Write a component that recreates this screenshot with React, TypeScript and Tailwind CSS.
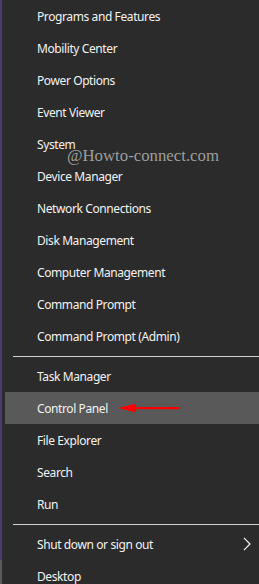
const groupA = [
  "Programs and Features",
  "Mobility Center",
  "Power Options",
  "Event Viewer",
  "System",
  "Device Manager",
  "Network Connections",
  "Disk Management",
  "Computer Management",
  "Command Prompt",
  "Command Prompt (Admin)",
];

const groupB = ["Task Manager", "Control Panel", "File Explorer", "Search", "Run"];

function Item({ label, active, children }: { label: string; active?: boolean; children?: React.ReactNode }) {
  return (
    <li
      className={
        "ml-[3px] h-8 flex items-center pl-[32px] text-[12px] tracking-[-0.4px] text-[#f2f2f2] relative " +
        (active ? "bg-[#595959]" : "")
      }
    >
      <span className="pt-px">{label}</span>
      {children}
    </li>
  );
}

function Separator() {
  return (
    <li className="h-2 flex items-center pl-[11px]">
      <div className="h-px w-full bg-[#d0d0d0]" />
    </li>
  );
}

export default function App() {
  return (
    <div
      className="w-[259px] h-[584px] overflow-hidden bg-[#2b2b2b] flex"
      style={{ fontFamily: '"Noto Sans", "Open Sans", sans-serif' }}
    >
      <div className="w-[2px] flex flex-col">
        <div className="h-[560px] bg-[#4b3b6e]" />
        <div className="flex-1 bg-[#5a5a5a]" />
      </div>
      <ul className="flex-1 relative">
        {groupA.map((l) => (
          <Item key={l} label={l} />
        ))}
        <Separator />
        {groupB.map((l) => (
          <Item key={l} label={l} active={l === "Control Panel"}>
            {l === "Control Panel" && (
              <svg className="absolute left-[113px] top-[10px]" width="64" height="12" viewBox="0 0 64 12">
                <polygon points="0,6 18,1.5 18,10.5" fill="#ff0000" />
                <rect x="16" y="5" width="46" height="2.2" fill="#ff0000" />
              </svg>
            )}
          </Item>
        ))}
        <Separator />
        <Item label="Shut down or sign out">
          <svg className="absolute right-[8px] top-[9px]" width="8" height="14" viewBox="0 0 8 14">
            <polyline points="1,1 7,7 1,13" fill="none" stroke="#f2f2f2" strokeWidth="1.2" />
          </svg>
        </Item>
        <Item label="Desktop" />
        <span
          className="absolute left-[65px] top-[148px] text-[16.8px] text-[#9d9d9d] leading-none"
          style={{ fontFamily: '"Liberation Serif", serif' }}
        >
          @Howto-connect.com
        </span>
      </ul>
    </div>
  );
}
